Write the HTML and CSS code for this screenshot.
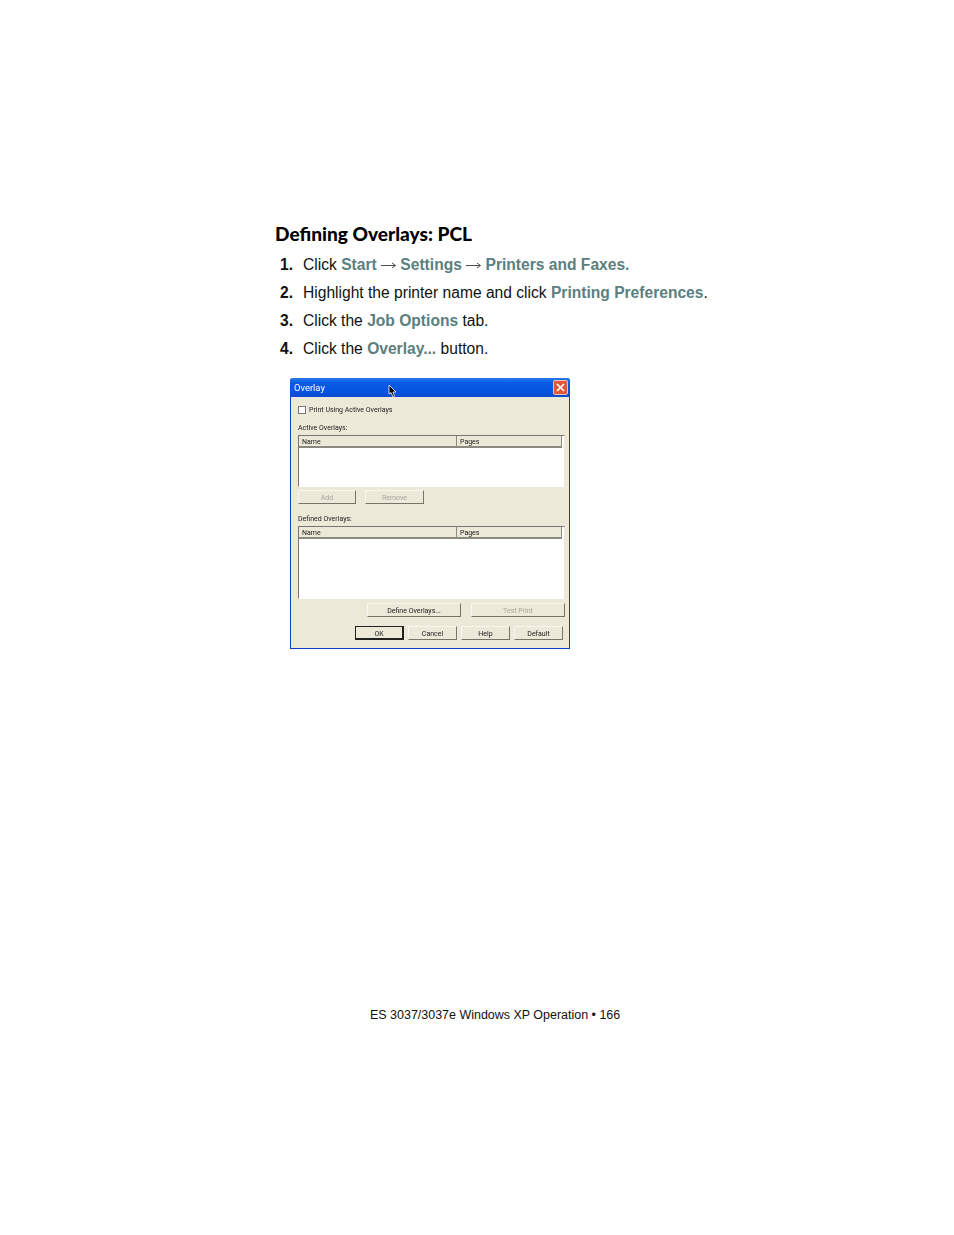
FILE: index.html
```html
<!DOCTYPE html>
<html lang="en">
<head>
    <meta charset="UTF-8">
    <title>Defining Overlays: PCL</title>
    <link rel="stylesheet" href="styles.css">
</head>
<body>
    <div class="page">
        <h1>Defining Overlays: PCL</h1>
        <ol class="steps">
            <li><span class="num">1.</span><span>Click <b>Start</b> <svg class="arrow" width="15" height="7" viewBox="0 0 15 7"><path d="M0 3.5 H14 M11 1 L14.5 3.5 L11 6" fill="none" stroke="#222" stroke-width=".8"/></svg> <b>Settings</b> <svg class="arrow" width="15" height="7" viewBox="0 0 15 7"><path d="M0 3.5 H14 M11 1 L14.5 3.5 L11 6" fill="none" stroke="#222" stroke-width=".8"/></svg> <b>Printers and Faxes.</b></span></li>
            <li><span class="num">2.</span><span>Highlight the printer name and click <b>Printing Preferences</b>.</span></li>
            <li><span class="num">3.</span><span>Click the <b>Job Options</b> tab.</span></li>
            <li><span class="num">4.</span><span>Click the <b>Overlay...</b> button.</span></li>
        </ol>

        <!-- screenshot of the xp dialog -->
        <div class="dialog">
            <div class="titlebar">
                <span>Overlay</span>
                <svg class="cursor" width="9" height="14" viewBox="0 0 9 14">
                    <path d="M1 1 L1 10 L3 8.5 L5 13 L6.5 12.2 L5 8 L8 8 Z" fill="#000" stroke="#fff" stroke-width=".8"/>
                </svg>
                <div class="close">
                    <svg width="9" height="9" viewBox="0 0 9 9">
                        <path d="M1 1 L8 8 M8 1 L1 8" stroke="#fff" stroke-width="1.7"/>
                    </svg>
                </div>
            </div>
            <div class="content">
                <label class="check"><span class="box"></span>Print Using Active Overlays</label>
                <div class="caption active-caption">Active Overlays:</div>
                <div class="list short">
                    <div class="cols"><div class="col-name">Name</div><div class="col-pages">Pages</div></div>
                </div>
                <div class="row add-row">
                    <div class="btn off add">Add</div>
                    <div class="btn off remove">Remove</div>
                </div>
                <div class="caption defined-caption">Defined Overlays:</div>
                <div class="list tall">
                    <div class="cols"><div class="col-name">Name</div><div class="col-pages">Pages</div></div>
                </div>
                <div class="row define-row">
                    <div class="btn define">Define Overlays...</div>
                    <div class="btn off test">Test Print</div>
                </div>
                <div class="row bottom-row">
                    <div class="btn small ok">OK</div>
                    <div class="btn small">Cancel</div>
                    <div class="btn small">Help</div>
                    <div class="btn small">Default</div>
                </div>
            </div>
        </div>
    </div>
    <div class="footer">ES 3037/3037e Windows XP Operation &bull; 166</div>
</body>
</html>
```

FILE: styles.css
```css
body {
    margin: 0;
    background: #fff;
    color: #111;
    font-family: "Liberation Sans", Arial, sans-serif;
}
.page {
    height: 1007px;
    padding: 222px 0 0 275px;
    box-sizing: border-box;
}
h1 {
    margin: 0;
    font-family: "Lato", sans-serif;
    font-size: 19.1px;
    line-height: 24px;
    font-weight: 900;
    color: #000;
}
.steps {
    list-style: none;
    margin: 5px 0 0;
    padding: 0 0 0 5px;
    font-size: 15.6px;
    line-height: 28px;
}
.steps li {
    display: flex;
}
.steps .num {
    width: 23px;
    font-weight: 700;
}
.steps b {
    color: #5a8080;
}
.arrow {
    vertical-align: 1px;
}

/* dialog */
.dialog {
    width: 280px;
    height: 271px;
    margin: 15px 0 0 15px;
    box-sizing: border-box;
    background: #ece9d8;
    border: 1px solid #0a3fc4;
    border-top: 0;
    border-radius: 3px 3px 0 0;
    font-family: "Roboto", sans-serif;
    font-size: 7px;
    line-height: 10px;
    color: #222;
    filter: blur(.3px);
}
.titlebar {
    position: relative;
    display: flex;
    align-items: center;
    justify-content: space-between;
    height: 19px;
    margin: 0 -1px;
    padding: 0 2px 0 4px;
    border-radius: 3px 3px 0 0;
    background: linear-gradient(#2a7bf0, #0a5be4 25%, #0553e0 75%, #0a4ad0);
    color: #fff;
    font-size: 9.4px;
}
.cursor {
    position: absolute;
    left: 98px;
    top: 6px;
}
.close {
    display: flex;
    align-items: center;
    justify-content: center;
    width: 13px;
    height: 13px;
    border: 1px solid #f0c0b0;
    border-radius: 2px;
    background: #e0583a;
}
.content {
    padding: 8px 4px 0 7px;
}
.check {
    display: flex;
    align-items: center;
    gap: 3px;
    height: 9px;
    margin-bottom: -1px;
}
.box {
    width: 6px;
    height: 6px;
    border: 1px solid #777;
    background: #fff;
}
.caption {
    height: 10px;
    line-height: 12px;
}
.active-caption {
    margin-top: 9px;
}
.defined-caption {
    margin-top: 9px;
}
.list {
    margin-top: 3px;
    width: 267px;
    box-sizing: border-box;
    background: #fff;
    border: 1px solid #777;
    border-right-color: #ece9d8;
    border-bottom-color: #fff;
}
.list.short {
    height: 52px;
}
.list.tall {
    height: 73px;
}
.cols {
    display: flex;
    height: 10px;
    margin-right: 2px;
    background: #ece9d8;
    border: 1px solid #8a8a80;
    border-width: 0 1px 2px 0;
    line-height: 12px;
}
.col-name {
    box-sizing: border-box;
    width: 158px;
    padding-left: 3px;
    border-right: 1px solid #8a8a80;
}
.col-pages {
    padding-left: 3px;
}
.row {
    display: flex;
}
.btn {
    box-sizing: border-box;
    height: 14px;
    line-height: 14px;
    text-align: center;
    background: #ece9d8;
    border: 1px solid #f8f6ee;
    border-right-color: #77756a;
    border-bottom-color: #77756a;
}
.btn.off {
    color: #a8a69a;
}
.add-row {
    gap: 9px;
    margin-top: 3px;
}
.add {
    width: 58px;
}
.remove {
    width: 59px;
}
.define-row {
    justify-content: flex-end;
    gap: 10px;
    margin-top: 4px;
}
.define,
.test {
    width: 94px;
}
.bottom-row {
    justify-content: flex-end;
    gap: 4px;
    margin-top: 9px;
    padding-right: 2px;
}
.small {
    width: 49px;
}
.ok {
    border: 1px solid #222;
    border-right-width: 2px;
    border-bottom-width: 2px;
}

.footer {
    margin-left: 370px;
    font-size: 12.47px;
    line-height: 16px;
}
```
